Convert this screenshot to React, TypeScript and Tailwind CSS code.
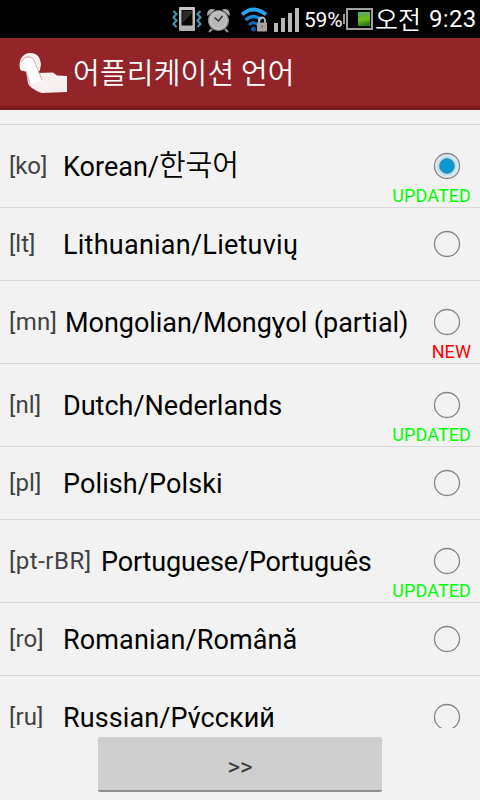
type Tag = 'UPDATED' | 'NEW';

interface Language {
  code: string;
  name: string;
  native?: string;
  tag?: Tag;
  tall?: boolean;
  selected?: boolean;
  codeClass: string;
  nameClass: string;
}

const languages: Language[] = [
  { code: '[ko]', name: 'Korean/', native: '한국어', tag: 'UPDATED', selected: true, codeClass: 'w-[54px] tracking-[-0.1px]', nameClass: '' },
  { code: '[lt]', name: 'Lithuanian/Lietuvių', codeClass: 'w-[54px]', nameClass: 'tracking-[0.25px]' },
  { code: '[mn]', name: 'Mongolian/Mongɣol (partial)', tag: 'NEW', codeClass: 'w-[56px] tracking-[0.3px]', nameClass: 'tracking-[-0.04px]' },
  { code: '[nl]', name: 'Dutch/Nederlands', tag: 'UPDATED', codeClass: 'w-[54px] tracking-[0.1px]', nameClass: '' },
  { code: '[pl]', name: 'Polish/Polski', codeClass: 'w-[54px] tracking-[0.1px]', nameClass: 'tracking-[0.1px]' },
  { code: '[pt-rBR]', name: 'Portuguese/Português', tag: 'UPDATED', codeClass: 'w-[92px] tracking-[0.5px]', nameClass: 'tracking-[-0.15px]' },
  { code: '[ro]', name: 'Romanian/Română', codeClass: 'w-[54px] tracking-[0.1px]', nameClass: 'tracking-[0.12px]' },
  { code: '[ru]', name: 'Russian/Ру́сский', tall: true, codeClass: 'w-[54px] tracking-[0.1px]', nameClass: 'tracking-[0.1px]' },
];

function Radio({ selected }: { selected?: boolean }) {
  return (
    <svg width="28" height="28" viewBox="0 0 28 28" className="shrink-0">
      <defs>
        <radialGradient id="glow">
          <stop offset="0.6" stopColor="#a5d9ee" />
          <stop offset="1" stopColor="#ebf2f4" />
        </radialGradient>
      </defs>
      {selected && <circle cx="14" cy="14" r="12" fill="url(#glow)" />}
      <circle cx="14" cy="14" r="12.5" fill="none" stroke="#858585" strokeWidth="1.3" />
      {selected && <circle cx="14" cy="14" r="7.3" fill="#0799cf" stroke="#3f87a3" strokeWidth="1" />}
    </svg>
  );
}

function Row({ item }: { item: Language }) {
  return (
    <li className={`relative flex shrink-0 items-center border-b border-[#d8d8d8] pl-[9px] pr-[19px] ${item.tag || item.tall ? 'h-[83px]' : 'h-[73px]'}`}>
      <span className={`shrink-0 whitespace-nowrap text-[24px] leading-[30px] text-[#424242] ${item.codeClass}`}>{item.code}</span>
      <span className={`flex-1 whitespace-nowrap text-[27px] leading-[34px] text-black ${item.native ? '' : 'pt-[2px]'} ${item.nameClass}`}>
        {item.name}
        {item.native && <span className="font-['Noto_Sans_CJK_KR',sans-serif] text-[29px] font-[350] leading-[30px]">{item.native}</span>}
      </span>
      <Radio selected={item.selected} />
      {item.tag && (
        <span className={`absolute bottom-0 right-[9px] text-[18px] leading-[22px] tracking-[0.1px] ${item.tag === 'NEW' ? 'text-[#ff0000]' : 'text-[#00ff00]'}`}>
          {item.tag}
        </span>
      )}
    </li>
  );
}

function VibrateIcon() {
  return (
    <svg width="30" height="26" viewBox="0 0 30 26">
      <defs>
        <linearGradient id="metal" x1="0" y1="0" x2="0" y2="1">
          <stop offset="0" stopColor="#c8c8c8" />
          <stop offset="1" stopColor="#b0b0b0" />
        </linearGradient>
      </defs>
      <rect x="7" y="1" width="16" height="24" rx="1" fill="url(#metal)" />
      <rect x="9.500" y="4" width="11" height="15.500" fill="#080808" />
      <path d="M10.500 5h9.500v2L10.500 17z" fill="#2c2c2c" />
      <path
        d="M1.500 5l3 3-3 3.500 3 3-3 3.500 3 3M28.500 5l-3 3 3 3.500-3 3 3 3.500-3 3"
        fill="none"
        stroke="#4c94ba"
        strokeWidth="2"
      />
    </svg>
  );
}

function AlarmIcon() {
  return (
    <svg width="26" height="26" viewBox="0 0 26 26" fill="none">
      <path d="M6 22l-3 3M19 22l3 3" stroke="#999" strokeWidth="2" />
      <path d="M1.500 9C0 4 4 .5 9 2.500zM23.500 9C25 4 21 .5 16 2.500z" fill="#aaa" />
      <circle cx="12.500" cy="13.500" r="10" fill="#b8b8b8" stroke="#858585" strokeWidth="1.200" />
      <circle cx="12.500" cy="13.500" r="8" stroke="#cfcfcf" />
      <path d="M8.500 10.500l4 3.500 4-5" stroke="#333" strokeWidth="1.500" />
    </svg>
  );
}

function WifiIcon() {
  return (
    <svg width="28" height="26" viewBox="0 0 28 26" fill="none">
      <path d="M2 7.500Q13.500-2.500 26 7.500" stroke="#2ca4f5" strokeWidth="4" />
      <path d="M5.500 13Q13.500 6 21.500 13" stroke="#1587dc" strokeWidth="3.400" />
      <path d="M9 18Q13.500 13.500 18 18" stroke="#0a6bc2" strokeWidth="3" />
      <circle cx="13.500" cy="22" r="2.500" fill="#0756a8" />
      <path d="M19 16v-2.500a3 3 0 016 0V16" stroke="#bbb" strokeWidth="1.800" />
      <rect x="17" y="15.500" width="10" height="9" rx="1" fill="#a9a39d" />
      <path d="M22 18v3" stroke="#777" strokeWidth="1.500" />
    </svg>
  );
}

function BatteryIcon() {
  return (
    <svg width="30" height="22" viewBox="0 0 30 22">
      <defs>
        <linearGradient id="charge" x1="0" y1="0" x2=".2" y2="1">
          <stop offset="0" stopColor="#4fb2a0" />
          <stop offset=".3" stopColor="#5eac35" />
          <stop offset=".6" stopColor="#70bd1d" />
          <stop offset="1" stopColor="#277d20" />
        </linearGradient>
      </defs>
      <path d="M1 6v10" stroke="#999" strokeWidth="2" />
      <rect x="4" y="1" width="25" height="20" fill="#050505" stroke="#a0a0a0" strokeWidth="2" />
      <rect x="15" y="4" width="12" height="14" fill="url(#charge)" />
    </svg>
  );
}

function StatusBar() {
  return (
    <div className="flex h-[38px] shrink-0 items-start bg-black text-white">
      <div className="ml-[172px] mt-[6px]"><VibrateIcon /></div>
      <div className="ml-[4px] mt-[7px]"><AlarmIcon /></div>
      <div className="ml-[8px] mt-[7px]"><WifiIcon /></div>
      <div className="ml-[6px] mt-[8px] flex h-[24px] w-[25px] items-end justify-between">
        <i className="h-[9px] w-[4px] bg-[#b8b8b8]" />
        <i className="h-[14px] w-[4px] bg-[#b8b8b8]" />
        <i className="h-[19px] w-[4px] bg-[#b8b8b8]" />
        <i className="h-[24px] w-[4px] bg-[#b8b8b8]" />
      </div>
      <span className="ml-[5px] w-[39px] whitespace-nowrap text-[21px] leading-[40px] tracking-[-0.2px]">59%</span>
      <div className="mt-[8px]"><BatteryIcon /></div>
      <span className="ml-[2px] w-[54px] whitespace-nowrap font-['Noto_Sans_CJK_KR',sans-serif] text-[25px] font-[350] leading-[36px]">오전</span>
      <span className="whitespace-nowrap text-[24px] leading-[38px] tracking-[0.3px]">9:23</span>
    </div>
  );
}

function AppLogo() {
  return (
    <svg width="50" height="44" viewBox="0 0 50 44">
      <path d="M1 17C-1 8 4 1 11 1c6 0 9 3 10 7l1 4-1 6-2 3 15-.5 4 3 10 .5v16l-25 1C17 39 10 35 9 31L7 20z" fill="#f8eff0" />
      <path d="M2 12C5 6 11 4 15 8c3 3 3 7 4 10l4 11-12 3-3-13-2-1-3 1c-3-2-2-5-1-7z" fill="#fff" />
      <path d="M2 10C5 4 12 3 15 8l8 20M7 19l4 13" fill="none" stroke="#b9888b" strokeWidth=".7" />
    </svg>
  );
}

export default function App() {
  return (
    <div className="flex h-[800px] w-[480px] flex-col overflow-hidden bg-[#f2f2f2] font-[Roboto,'Noto_Sans_CJK_KR',sans-serif]">
      <StatusBar />
      <header className="flex h-[72px] shrink-0 items-start border-b-[4px] border-[#7a1c1f] bg-[#932427]">
        <div className="ml-[19px] mt-[14px]"><AppLogo /></div>
        <h1 className="ml-[4px] mt-[13px] whitespace-nowrap font-['Noto_Sans_CJK_KR',sans-serif] text-[29px] font-[350] leading-[40px] tracking-[0.2px] text-white">
          어플리케이션 언어
        </h1>
      </header>
      <ul className="flex h-[618px] shrink-0 flex-col overflow-hidden">
        <li className="h-[15px] shrink-0 border-b border-[#d8d8d8]" />
        {languages.map((item) => <Row key={item.code} item={item} />)}
      </ul>
      <button className="mx-auto mt-[9px] h-[55px] w-[284px] rounded-[2px] border-b-2 border-[#8f8f8f] bg-[#cecece] pt-[6px] text-[24px] text-[#3a3a3a]">
        &gt;&gt;
      </button>
    </div>
  );
}
